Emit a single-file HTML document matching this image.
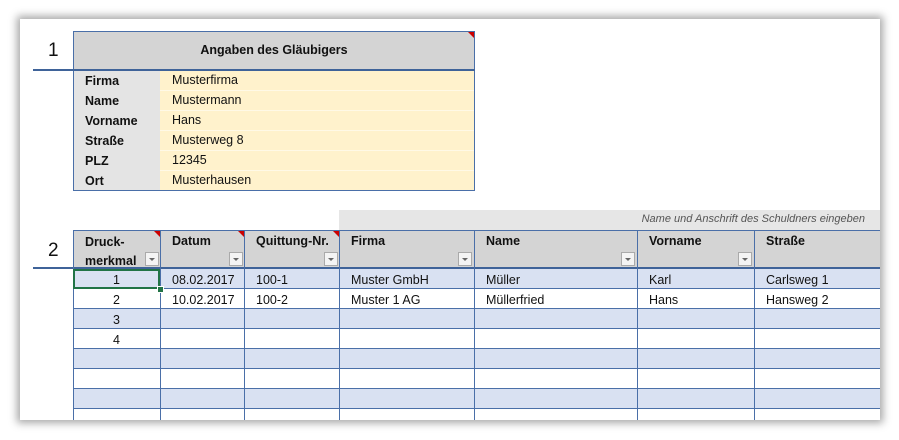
<!DOCTYPE html><html><head><meta charset="utf-8"><style>
body{margin:0;width:899px;height:440px;background:#fff;position:relative;overflow:hidden;font-family:"Liberation Sans",sans-serif;font-size:12.5px;color:#111}
.pg{position:absolute;left:20px;top:19px;width:860px;height:401px;background:#fff;box-shadow:0 0 8px 3px rgba(0,0,0,.35)}
.a{position:absolute}
.b{font-weight:bold}
.fb{position:absolute;width:12px;height:12px;border:1px solid #aaa;background:#f4f4f4}
.fb:after{content:"";position:absolute;left:3px;top:5px;border-left:3px solid transparent;border-right:3px solid transparent;border-top:3px solid #666}
.tri{position:absolute;width:0;height:0;border-left:6px solid transparent;border-top:6px solid #c00}
</style></head><body>
<div class="pg"></div>
<div class="a" style="left:48px;top:40px;font-size:19px">1</div>
<div class="a" style="left:73px;top:31px;width:402px;height:160px;border:1px solid #4a6fa8;box-sizing:border-box;background:#fff2cc"></div>
<div class="a" style="left:74px;top:32px;width:400px;height:37px;background:#d4d4d4"></div>
<div class="tri" style="left:468px;top:32px"></div>
<div class="a b" style="left:74px;top:43px;width:400px;text-align:center">Angaben des Gläubigers</div>
<div class="a" style="left:33px;top:69px;width:442px;height:2px;background:#3f6399"></div>
<div class="a" style="left:74px;top:71px;width:86px;height:119px;background:#e4e4e4"></div>
<div class="a" style="left:160px;top:90px;width:314px;height:1px;background:#fff9e6"></div>
<div class="a" style="left:160px;top:110px;width:314px;height:1px;background:#fff9e6"></div>
<div class="a" style="left:160px;top:130px;width:314px;height:1px;background:#fff9e6"></div>
<div class="a" style="left:160px;top:150px;width:314px;height:1px;background:#fff9e6"></div>
<div class="a" style="left:160px;top:170px;width:314px;height:1px;background:#fff9e6"></div>
<div class="a b" style="left:85px;top:71px;line-height:20px">Firma<br>Name<br>Vorname<br>Straße<br>PLZ<br>Ort</div>
<div class="a" style="left:172px;top:70px;line-height:20px">Musterfirma<br>Mustermann<br>Hans<br>Musterweg 8<br>12345<br>Musterhausen</div>
<div class="a" style="left:48px;top:240px;font-size:19px">2</div>
<div class="a" style="left:339px;top:210px;width:541px;height:20px;background:#e6e6e6"></div>
<div class="a" style="left:339px;top:213px;width:526px;text-align:right;font-style:italic;font-size:11px;color:#555">Name und Anschrift des Schuldners eingeben</div>
<div class="a" style="left:73px;top:230px;width:807px;height:38px;background:#d4d4d4;border-top:1px solid #4a6fa8"></div>
<div class="a" style="left:33px;top:267px;width:847px;height:2px;background:#3f6399"></div>
<div class="a" style="left:73px;top:269px;width:807px;height:151px;background:repeating-linear-gradient(#d9e1f2 0 19px,#4a6fa8 19px 20px,#fff 20px 39px,#4a6fa8 39px 40px)"></div>
<div class="a" style="left:73px;top:230px;width:1px;height:190px;background:#4a6fa8"></div>
<div class="a" style="left:160px;top:230px;width:1px;height:190px;background:#4a6fa8"></div>
<div class="a" style="left:244px;top:230px;width:1px;height:190px;background:#4a6fa8"></div>
<div class="a" style="left:339px;top:230px;width:1px;height:190px;background:#4a6fa8"></div>
<div class="a" style="left:474px;top:230px;width:1px;height:190px;background:#4a6fa8"></div>
<div class="a" style="left:637px;top:230px;width:1px;height:190px;background:#4a6fa8"></div>
<div class="a" style="left:754px;top:230px;width:1px;height:190px;background:#4a6fa8"></div>
<div class="tri" style="left:154px;top:231px"></div>
<div class="tri" style="left:238px;top:231px"></div>
<div class="tri" style="left:333px;top:231px"></div>
<div class="a b" style="left:85px;top:233px;line-height:19px">Druck-<br>merkmal</div>
<div class="a b" style="left:172px;top:234px">Datum</div>
<div class="a b" style="left:256px;top:234px">Quittung-Nr.</div>
<div class="a b" style="left:351px;top:234px">Firma</div>
<div class="a b" style="left:486px;top:234px">Name</div>
<div class="a b" style="left:649px;top:234px">Vorname</div>
<div class="a b" style="left:766px;top:234px">Straße</div>
<div class="fb" style="left:145px;top:252px"></div>
<div class="fb" style="left:229px;top:252px"></div>
<div class="fb" style="left:324px;top:252px"></div>
<div class="fb" style="left:458px;top:252px"></div>
<div class="fb" style="left:621px;top:252px"></div>
<div class="fb" style="left:738px;top:252px"></div>
<div class="a" style="left:73px;top:269px;width:87px;height:20px;border:2px solid #217346;box-sizing:border-box"></div>
<div class="a" style="left:157px;top:286px;width:5px;height:5px;background:#217346;border:1px solid #fff"></div>
<div class="a" style="left:73px;top:270px;width:87px;text-align:center;line-height:20px">1<br>2<br>3<br>4</div>
<div class="a" style="left:172px;top:270px;line-height:20px">08.02.2017<br>10.02.2017</div>
<div class="a" style="left:256px;top:270px;line-height:20px">100-1<br>100-2</div>
<div class="a" style="left:351px;top:270px;line-height:20px">Muster GmbH<br>Muster 1 AG</div>
<div class="a" style="left:486px;top:270px;line-height:20px">Müller<br>Müllerfried</div>
<div class="a" style="left:649px;top:270px;line-height:20px">Karl<br>Hans</div>
<div class="a" style="left:766px;top:270px;line-height:20px">Carlsweg 1<br>Hansweg 2</div>
</body></html>
